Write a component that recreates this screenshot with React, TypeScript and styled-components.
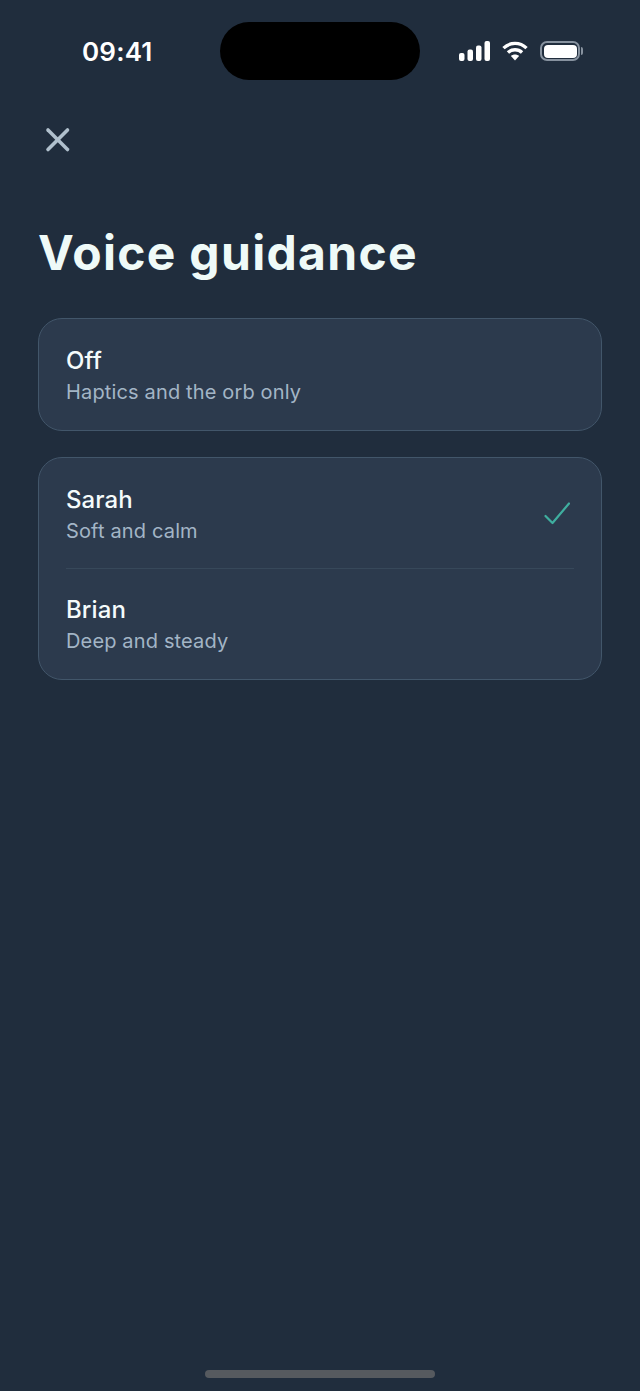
import React from 'react';
import styled, { createGlobalStyle } from 'styled-components';

const GlobalStyle = createGlobalStyle`
  html, body {
    margin: 0;
    padding: 0;
    background: #202d3d;
  }
  * {
    box-sizing: border-box;
  }
`;

const voices = [
  { name: 'Sarah', note: 'Soft and calm', selected: true },
  { name: 'Brian', note: 'Deep and steady', selected: false },
];

export default function App() {
  return (
    <Screen>
      <GlobalStyle />
      <StatusBar>
        <Clock>09:41</Clock>
        <Island />
        <StatusIcons>
          <svg width="31" height="20" viewBox="0 0 31 20" fill="#fff">
            <rect x="0" y="12" width="5.5" height="8" rx="2" />
            <rect x="8.5" y="8.5" width="5.5" height="11.5" rx="2" />
            <rect x="17" y="4.5" width="5.5" height="15.5" rx="2" />
            <rect x="25.5" y="0" width="5.5" height="20" rx="2" />
          </svg>
          <svg width="26" height="20" viewBox="0 0 28 21" fill="none" stroke="#fff" strokeWidth="3.6">
            <path d="M1.6 7.4C8.6 0.6 19.4 0.6 26.4 7.4" />
            <path d="M6.4 12.2C10.6 8.2 17.4 8.2 21.6 12.2" />
            <path d="M14 20.6L9.6 16C12 13.8 16 13.8 18.4 16Z" fill="#fff" stroke="none" />
          </svg>
          <Battery>
            <BatteryFill />
          </Battery>
        </StatusIcons>
      </StatusBar>

      <CloseButton aria-label="Close">
        <svg width="26" height="26" viewBox="0 0 26 26" fill="none" stroke="#b0c0cd" strokeWidth="3.6" strokeLinecap="round">
          <path d="M3 3L22.5 22.5" />
          <path d="M22.5 3L3 22.5" />
        </svg>
      </CloseButton>

      <Title>Voice guidance</Title>

      <Cards>
        <Card>
          <Row>
            <RowText>
              <RowName>Off</RowName>
              <RowNote>Haptics and the orb only</RowNote>
            </RowText>
          </Row>
        </Card>
        <Card>
          {voices.map((voice) => (
            <Row key={voice.name}>
              <RowText>
                <RowName>{voice.name}</RowName>
                <RowNote>{voice.note}</RowNote>
              </RowText>
              {voice.selected && (
                <CheckMark width="26" height="24" viewBox="0 0 26 24" fill="none" stroke="#3fae9f" strokeWidth="2.2" strokeLinecap="round" strokeLinejoin="round">
                  <path d="M1.5 15L8.5 22L25 2.5" />
                </CheckMark>
              )}
            </Row>
          ))}
        </Card>
      </Cards>

      <HomeIndicator />
    </Screen>
  );
}

const Screen = styled.div`
  position: relative;
  width: 640px;
  height: 1391px;
  overflow: hidden;
  padding: 22px 38px 0;
  background: #202d3d;
  font-family: Inter, 'Liberation Sans', sans-serif;
`;

const StatusBar = styled.div`
  display: flex;
  align-items: center;
  height: 58px;
  margin: 0 -1px;
  padding-left: 45px;
`;

const Clock = styled.div`
  width: 138px;
  color: #fff;
  font-size: 26px;
  font-weight: 600;
  letter-spacing: 0.2px;
`;

const Island = styled.div`
  width: 200px;
  height: 58px;
  border-radius: 29px;
  background: #000;
`;

const StatusIcons = styled.div`
  display: flex;
  align-items: center;
  gap: 12px;
  padding-left: 39px;
`;

const Battery = styled.div`
  position: relative;
  width: 40px;
  height: 20px;
  padding: 1.5px;
  border: 2px solid #87929f;
  border-radius: 7px;

  &::after {
    content: '';
    position: absolute;
    top: 4px;
    right: -5px;
    width: 2px;
    height: 8px;
    border-radius: 0 2px 2px 0;
    background: #87929f;
  }
`;

const BatteryFill = styled.div`
  width: 100%;
  height: 100%;
  border-radius: 4px;
  background: #fff;
`;

const CloseButton = styled.button`
  display: block;
  margin: 47px 0 0 7px;
  padding: 0;
  width: 26px;
  height: 26px;
  border: 0;
  background: none;
`;

const Title = styled.h1`
  margin: 72px 0 0;
  color: #effaf8;
  font-family: Inter, 'Liberation Sans', sans-serif;
  font-size: 48px;
  font-weight: 700;
  line-height: 56px;
  letter-spacing: 1.3px;
`;

const Cards = styled.div`
  display: flex;
  flex-direction: column;
  gap: 26px;
  margin-top: 37px;
  width: 564px;
`;

const Card = styled.div`
  padding: 0 27px 1px;
  border: 1px solid #42566a;
  border-radius: 24px;
  background: #2c3a4d;
`;

const Row = styled.div`
  display: flex;
  align-items: center;
  justify-content: space-between;
  height: 110px;

  & + & {
    padding-bottom: 1px;
    border-top: 1px solid #37485a;
  }
`;

const RowText = styled.div`
  display: flex;
  flex-direction: column;
  gap: 3px;
  padding-top: 3px;
`;

const RowName = styled.div`
  color: #f5fbfb;
  font-size: 24px;
  font-weight: 500;
  line-height: 30px;
  letter-spacing: 0.1px;
`;

const RowNote = styled.div`
  color: #a3b5c6;
  font-size: 20px;
  line-height: 26px;
  letter-spacing: 0.15px;
`;

const CheckMark = styled.svg`
  margin-right: 4px;
`;

const HomeIndicator = styled.div`
  position: absolute;
  left: 205px;
  bottom: 13px;
  width: 230px;
  height: 8px;
  border-radius: 4px;
  background: #565a5f;
`;
